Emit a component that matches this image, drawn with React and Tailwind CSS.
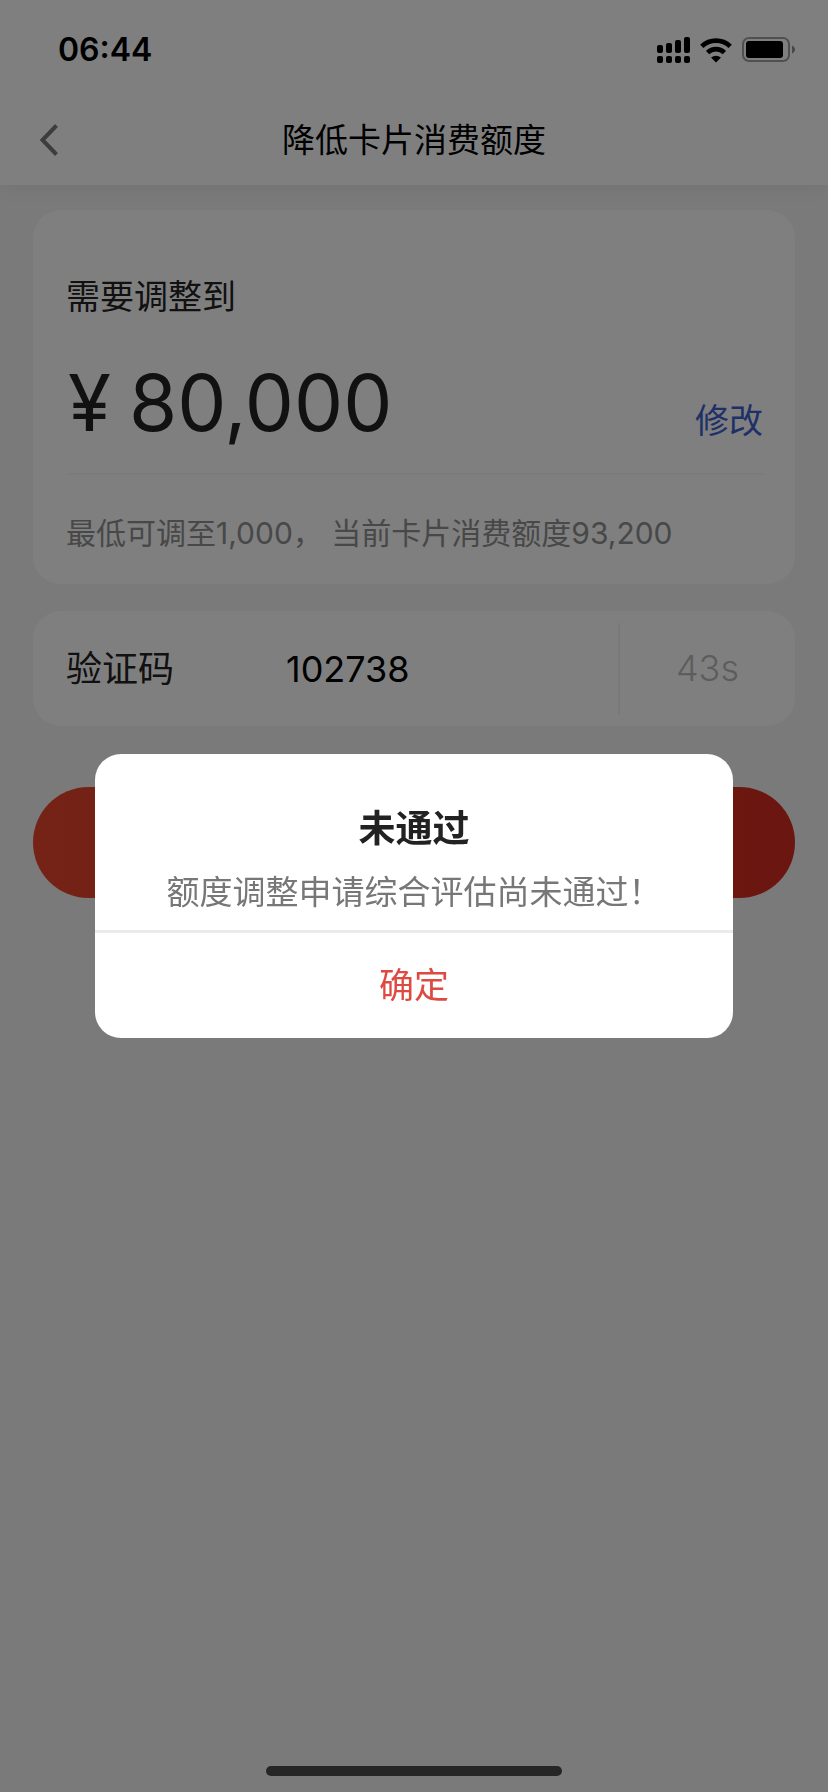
import React, { useState } from 'react';

const SignalIcon = () => (
  <svg width="33" height="26" viewBox="0 0 33 26" aria-hidden="true">
    <rect x="0" y="8" width="6" height="8" rx="2" />
    <rect x="9" y="6" width="6" height="10" rx="2" />
    <rect x="18" y="3" width="6" height="13" rx="2" />
    <rect x="27" y="0" width="6" height="16" rx="2" />
    <rect x="0" y="19" width="6" height="7" rx="2" />
    <rect x="9" y="19" width="6" height="7" rx="2" />
    <rect x="18" y="19" width="6" height="7" rx="2" />
    <rect x="27" y="19" width="6" height="7" rx="2" />
  </svg>
);

const WifiIcon = () => (
  <svg width="32" height="25" viewBox="0 0 32 25" fill="none" stroke="#000" aria-hidden="true">
    <path d="M1.8 8.4A20.4 20.4 0 0 1 30.2 8.4" strokeWidth="4.8" />
    <path d="M7.6 14.6A12 12 0 0 1 24.4 14.6" strokeWidth="4.6" />
    <path d="M16 24.5L11 19.6Q16 16 21 19.6Z" fill="#000" stroke="none" />
  </svg>
);

const BatteryIcon = () => (
  <svg width="54" height="26" viewBox="0 0 54 26" aria-hidden="true">
    <rect x="1" y="1" width="46" height="23" rx="6" fill="none" stroke="#a0a0a0" strokeWidth="2" />
    <rect x="4" y="4" width="37" height="17" rx="3" />
    <path d="M50 8.5C54 10 54 15 50 16.5Z" fill="#909090" />
  </svg>
);

const StatusBar = () => (
  <div className="flex items-center justify-between pt-7 pl-[58px] pr-8">
    <span className="text-[32px] leading-[44px] font-semibold text-black">06:44</span>
    <div className="flex items-center gap-2.5">
      <SignalIcon />
      <WifiIcon />
      <BatteryIcon />
    </div>
  </div>
);

const NavBar = () => (
  <div className="grid grid-cols-[1fr_auto_1fr] items-center px-10 pt-10 pb-[17px]">
    <button type="button" aria-label="返回" className="justify-self-start py-3">
      <svg width="18" height="32" viewBox="0 0 18 32" fill="none" stroke="#7a7a7a" strokeWidth="4" aria-hidden="true">
        <path d="M16.5 1.5L2.5 16L16.5 30.5" />
      </svg>
    </button>
    <h1 className="text-[33px] leading-[48px] text-black">降低卡片消费额度</h1>
  </div>
);

const LimitCard = () => (
  <section className="rounded-[28px] bg-white pl-[33px] pr-8 pt-[63px] pb-[25px]">
    <h2 className="text-[34px] leading-[48px] text-[#222]">需要调整到</h2>
    <div className="flex items-end justify-between border-b-2 border-[#f7f7f7] pt-[34px] pb-[22px]">
      <p className="flex gap-[18px] pl-0.5 text-[78px] leading-[96px] text-[#222]">
        <span>¥</span>
        <span>80,000</span>
      </p>
      <button type="button" className="text-[34px] leading-[60px] text-[#3f5fd0]">修改</button>
    </div>
    <p className="pt-8 text-[30px] leading-[52px] text-[#909090]">
      最低可调至1,000， 当前卡片消费额度93,200
    </p>
  </section>
);

const CodeCard = () => {
  const [code, setCode] = useState('102738');

  return (
    <section className="flex items-center rounded-[28px] bg-white py-3 pl-[33px]">
      <label htmlFor="code" className="w-[220px] shrink-0 text-[36px] leading-[52px] text-[#222]">验证码</label>
      <input
        id="code"
        inputMode="numeric"
        value={code}
        onChange={(e) => setCode(e.target.value)}
        className="min-w-0 flex-1 bg-transparent text-[36px] leading-[52px] text-black outline-none"
      />
      <span className="w-[177px] shrink-0 border-l-2 border-[#f2f2f2] text-center text-[36px] leading-[91px] font-light text-[#bbb]">43s</span>
    </section>
  );
};

const ResultDialog = ({ onClose }) => (
  <div className="fixed inset-0 flex items-center justify-center bg-black/50">
    <div role="alertdialog" aria-labelledby="result-title" aria-describedby="result-text" className="w-[77%] overflow-hidden rounded-[26px] bg-white text-center">
      <div className="px-8 pt-[49px] pb-4">
        <h2 id="result-title" className="text-[37px] leading-[52px] font-bold text-[#222]">未通过</h2>
        <p id="result-text" className="pt-[15px] text-[33px] leading-[44px] text-[#777]">额度调整申请综合评估尚未通过！</p>
      </div>
      <button type="button" onClick={onClose} className="w-full border-t-3 border-[#ebebeb] py-7 text-[35px] leading-[49px] text-[#dc4a41]">
        确定
      </button>
    </div>
  </div>
);

const App = () => {
  const [open, setOpen] = useState(true);

  return (
    <div className="min-h-screen bg-[#f4f4f4] font-[Inter,'Noto_Sans_CJK_SC',sans-serif]">
      <header className="bg-white shadow-[0_0_20px_rgba(0,0,0,0.08)]">
        <StatusBar />
        <NavBar />
      </header>
      <main className="flex flex-col px-[33px] pt-[25px]">
        <LimitCard />
        <div className="pt-[27px]">
          <CodeCard />
        </div>
        <button
          type="button"
          aria-label="提交"
          className="mt-[61px] h-[111px] rounded-full bg-linear-to-r from-[#ea462e] to-[#d62c20]"
        />
      </main>
      {open && <ResultDialog onClose={() => setOpen(false)} />}
      <div className="fixed inset-x-0 bottom-4 flex justify-center">
        <div className="h-2.5 w-[296px] rounded-full bg-[#262626]" />
      </div>
    </div>
  );
};

export default App;
